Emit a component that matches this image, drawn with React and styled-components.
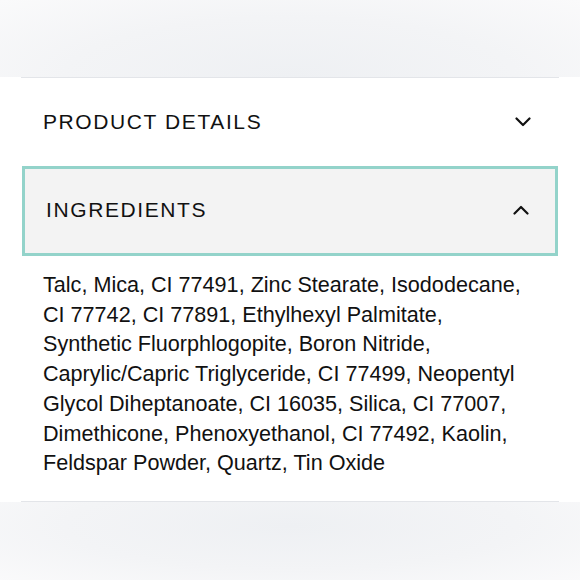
import React from "react";
import styled, { createGlobalStyle } from "styled-components";

const Global = createGlobalStyle`
  html, body { margin: 0; padding: 0; background: #ffffff; }
  body { font-family: "Liberation Sans", Arial, Helvetica, sans-serif; color: #111; }
`;

const Page = styled.div`
  width: 580px;
  height: 580px;
  display: flex;
  flex-direction: column;
  overflow: hidden;
`;

const Band = styled.div`
  height: ${(p) => p.$h}px;
  flex: none;
  background: radial-gradient(ellipse at 50% ${(p) => (p.$top ? "100%" : "30%")}, #eef0f3 0%, #f3f4f6 55%, #fafafb 100%);
`;

const Panel = styled.div`
  flex: none;
  background: #fff;
  padding: 0 21px;
`;

const Divider = styled.div`
  height: 1px;
  background: #e3e5e9;
`;

const Row = styled.div`
  height: ${(p) => p.$h}px;
  box-sizing: border-box;
  display: flex;
  align-items: center;
  justify-content: space-between;
  padding: 0 28px 2px 22px;
  background: ${(p) => (p.$active ? "#f3f3f3" : "transparent")};
  border: ${(p) => (p.$active ? "3px solid #93d3ca" : "none")};
  ${(p) => (p.$active ? "margin: -1px 1px 0; padding: 0 26px 2px 21px;" : "")}
`;

const Title = styled.span`
  font-size: 21px;
  letter-spacing: 1.6px;
  color: #111;
`;

const Body = styled.p`
  margin: 14px 0 0;
  padding: 0 0 23px 22px;
  font-size: 21.6px;
  line-height: 29.7px;
  color: #111;
  white-space: nowrap;
`;

const Chevron = ({ up }) => (
  <svg width="16" height="10" viewBox="0 0 16 10">
    <path
      d={up ? "M1.5 8.5 L8 2 L14.5 8.5" : "M1.5 1.5 L8 8 L14.5 1.5"}
      fill="none"
      stroke="#111"
      strokeWidth="2.2"
      strokeLinecap="round"
      strokeLinejoin="round"
    />
  </svg>
);

export default function App() {
  return (
    <Page>
      <Global />
      <Band $h={77} $top />
      <Panel>
        <Divider />
        <Row $h={89}>
          <Title>PRODUCT DETAILS</Title>
          <Chevron />
        </Row>
        <Row $h={90} $active>
          <Title>INGREDIENTS</Title>
          <Chevron up />
        </Row>
        <Body>
          Talc, Mica, CI 77491, Zinc Stearate, Isododecane,
          <br />
          CI 77742, CI 77891, Ethylhexyl Palmitate,
          <br />
          Synthetic Fluorphlogopite, Boron Nitride,
          <br />
          Caprylic/Capric Triglyceride, CI 77499, Neopentyl
          <br />
          Glycol Diheptanoate, CI 16035, Silica, CI 77007,
          <br />
          Dimethicone, Phenoxyethanol, CI 77492, Kaolin,
          <br />
          Feldspar Powder, Quartz, Tin Oxide
        </Body>
        <Divider />
      </Panel>
      <Band $h={80} />
    </Page>
  );
}
